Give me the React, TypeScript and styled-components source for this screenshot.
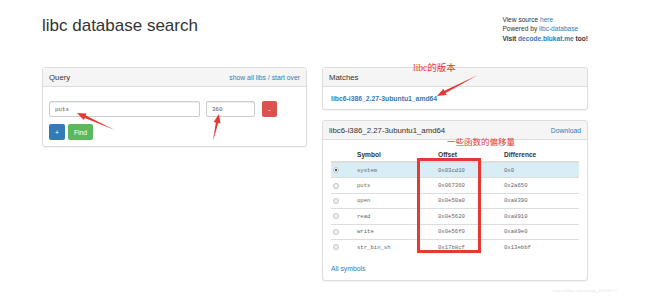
import React from 'react'
import styled, { createGlobalStyle } from 'styled-components'

const GlobalStyle = createGlobalStyle`
  html, body {
    margin: 0;
    padding: 0;
    background: #fff;
  }
  body {
    font-family: "Liberation Sans", Arial, sans-serif;
    color: #333;
  }
`

const symbols = [
  { name: 'system', offset: '0x03cd10', diff: '0x0' },
  { name: 'puts', offset: '0x067360', diff: '0x2a650' },
  { name: 'open', offset: '0x0e50a0', diff: '0xa8390' },
  { name: 'read', offset: '0x0e5620', diff: '0xa8910' },
  { name: 'write', offset: '0x0e56f0', diff: '0xa89e0' },
  { name: 'str_bin_sh', offset: '0x17b8cf', diff: '0x13ebbf' },
]

type Pt = [number, number]

// tapered red arrow, thin at the tail and a filled head at the tip
const arrowPoints = (tail: Pt, head: Pt, shaft = 2.6, headW = 7, headL = 9) => {
  const dx = head[0] - tail[0]
  const dy = head[1] - tail[1]
  const len = Math.hypot(dx, dy)
  const ux = dx / len
  const uy = dy / len
  const nx = -uy
  const ny = ux
  const bx = head[0] - ux * headL
  const by = head[1] - uy * headL
  const pts: Pt[] = [
    tail,
    [bx + nx * shaft / 2, by + ny * shaft / 2],
    [bx + nx * headW / 2, by + ny * headW / 2],
    head,
    [bx - nx * headW / 2, by - ny * headW / 2],
    [bx - nx * shaft / 2, by - ny * shaft / 2],
  ]
  return pts.map(p => p.map(v => v.toFixed(1)).join(',')).join(' ')
}

const App: React.FC = () =>
  <>
    <GlobalStyle />
    <Page>
      <Container>
        <Header>
          <Title>libc database search</Title>
          <About>
            <div>View source <a href="#">here</a></div>
            <div>Powered by <a href="#">libc-database</a></div>
            <strong>Visit <a href="#">decode.blukat.me</a> too!</strong>
          </About>
        </Header>

        <Columns>
          <Panel>
            <PanelHeading>
              <PanelTitle>Query</PanelTitle>
              <HeadLink href="#">show all libs / start over</HeadLink>
            </PanelHeading>
            <QueryBody>
              <FieldRow>
                <Field $width={151} defaultValue="puts" />
                <Field $width={49} defaultValue="360" />
                <Button $variant="danger" $width={15}>-</Button>
              </FieldRow>
              <ButtonRow>
                <Button $variant="primary" $width={16}>+</Button>
                <Button $variant="success" $width={25}>Find</Button>
              </ButtonRow>
            </QueryBody>
          </Panel>

          <Stack>
            <Panel>
              <PanelHeading>
                <PanelTitle>Matches</PanelTitle>
              </PanelHeading>
              <MatchBody>
                <MatchLink href="#">libc6-i386_2.27-3ubuntu1_amd64</MatchLink>
              </MatchBody>
            </Panel>

            <Panel>
              <PanelHeading>
                <PanelTitle>libc6-i386_2.27-3ubuntu1_amd64</PanelTitle>
                <HeadLink href="#">Download</HeadLink>
              </PanelHeading>
              <ResultBody>
                <Table>
                  <colgroup>
                    <Col $width={22} />
                    <Col $width={81} />
                    <Col $width={66} />
                    <Col />
                  </colgroup>
                  <thead>
                    <tr>
                      <Th />
                      <Th>Symbol</Th>
                      <Th>Offset</Th>
                      <Th>Difference</Th>
                    </tr>
                  </thead>
                  <tbody>
                    {symbols.map((s, i) =>
                      <Row key={s.name} $active={i === 0}>
                        <RadioCell><Radio $checked={i === 0} /></RadioCell>
                        <Td>{s.name}</Td>
                        <Td>{s.offset}</Td>
                        <Td>{s.diff}</Td>
                      </Row>
                    )}
                  </tbody>
                </Table>
                <AllLink href="#">All symbols</AllLink>
              </ResultBody>
            </Panel>
          </Stack>
        </Columns>
      </Container>

      <VersionNote>libc的版本</VersionNote>
      <OffsetNote>一些函数的偏移量</OffsetNote>
      <OffsetBox />
      <ArrowLayer width="650" height="296" viewBox="0 0 650 296">
        <polygon points={arrowPoints([115, 130], [77, 113])} />
        <polygon points={arrowPoints([213, 141], [219, 114])} />
        <polygon points={arrowPoints([478, 75], [437, 96])} />
      </ArrowLayer>
      <Watermark>https://blog.csdn.net/qq_41918771</Watermark>
    </Page>
  </>

const Page = styled.div`
  position: relative;
  width: 650px;
  height: 296px;
  overflow: hidden;
  background: #fff;
`

const Container = styled.div`
  width: 546px;
  padding-left: 42px;
`

const Header = styled.header`
  display: flex;
  justify-content: space-between;
  align-items: flex-start;
  height: 67px;
`

const Title = styled.h1`
  margin: 0;
  padding-top: 16px;
  font-size: 17px;
  line-height: 20px;
  font-weight: 400;
  color: #333;
`

const About = styled.div`
  padding-top: 15px;
  font-size: 6.6px;
  line-height: 9.4px;
  color: #333;

  a {
    color: #337ab7;
    text-decoration: none;
  }
`

const Columns = styled.div`
  display: grid;
  grid-template-columns: 265px 266px;
  column-gap: 15px;
  align-items: start;
`

const Stack = styled.div`
  display: flex;
  flex-direction: column;
  gap: 10px;
`

const Panel = styled.section`
  background: #fff;
  border: 1px solid #ddd;
  border-radius: 3px;
  box-shadow: 0 1px 1px rgba(0, 0, 0, 0.05);
`

const PanelHeading = styled.div`
  display: flex;
  justify-content: space-between;
  align-items: center;
  height: 18px;
  padding: 0 6px;
  background: #f5f5f5;
  border-bottom: 1px solid #ddd;
  border-radius: 2px 2px 0 0;
`

const PanelTitle = styled.span`
  font-size: 7.8px;
  color: #333;
`

const HeadLink = styled.a`
  font-size: 6.8px;
  color: #337ab7;
  text-decoration: none;
`

const QueryBody = styled.div`
  display: flex;
  flex-direction: column;
  gap: 7px;
  padding: 14px 6px 6px;
`

const FieldRow = styled.div`
  display: flex;
  align-items: center;
  gap: 6px;
`

const ButtonRow = styled.div`
  display: flex;
  gap: 3px;
`

const Field = styled.input<{ $width: number }>`
  box-sizing: border-box;
  width: ${({ $width }) => $width}px;
  height: 16px;
  padding: 0 5px;
  border: 1px solid #ccc;
  border-radius: 2px;
  box-shadow: inset 0 1px 1px rgba(0, 0, 0, 0.075);
  font-family: "Liberation Mono", monospace;
  font-size: 5.8px;
  color: #555;
  outline: none;
`

const buttonColors = {
  danger: '#d9534f',
  primary: '#337ab7',
  success: '#5cb85c',
}

const Button = styled.button<{ $variant: keyof typeof buttonColors; $width: number }>`
  box-sizing: border-box;
  width: ${({ $width }) => $width}px;
  height: 16px;
  padding: 0;
  border: 0;
  border-radius: 2px;
  background: ${({ $variant }) => buttonColors[$variant]};
  color: #fff;
  font-family: "Liberation Sans", Arial, sans-serif;
  font-size: 6.8px;
  margin-left: ${({ $variant }) => $variant === 'danger' ? 1 : 0}px;
`

const MatchBody = styled.div`
  display: flex;
  align-items: center;
  height: 22px;
  padding: 0 8px;
`

const MatchLink = styled.a`
  font-size: 6.8px;
  font-weight: bold;
  color: #337ab7;
  text-decoration: none;
`

const ResultBody = styled.div`
  padding: 8px 8px 6px;
`

const Table = styled.table`
  width: 100%;
  border-collapse: collapse;
  table-layout: fixed;
`

const Col = styled.col<{ $width?: number }>`
  width: ${({ $width }) => $width ? `${ $width }px` : 'auto'};
`

const Th = styled.th`
  height: 13px;
  padding: 0 4px;
  border-bottom: 2px solid #ddd;
  text-align: left;
  font-size: 6.6px;
  font-weight: bold;
  color: #333;
`

const Row = styled.tr<{ $active: boolean }>`
  background: ${({ $active }) => $active ? '#d9edf7' : 'transparent'};
`

const Td = styled.td`
  height: 14.4px;
  padding: 0 4px;
  border-top: 1px solid #ddd;
  font-family: "Liberation Mono", monospace;
  font-size: 5.6px;
  color: #666;
  white-space: nowrap;
`

const RadioCell = styled(Td)`
  padding: 0 0 0 2px;
`

const Radio = styled.span<{ $checked: boolean }>`
  display: block;
  box-sizing: border-box;
  width: 6px;
  height: 6px;
  border-radius: 50%;
  border: 1px solid #c4c4c4;
  background: ${({ $checked }) => $checked
    ? 'radial-gradient(circle, #555 0 35%, #f2f2f2 45%)'
    : '#f2f2f2'};
`

const AllLink = styled.a`
  display: block;
  margin-top: 10px;
  font-size: 6.8px;
  line-height: 10px;
  color: #337ab7;
  text-decoration: none;
`

const noteFont = `
  position: absolute;
  margin: 0;
  color: #e53935;
  font-family: "Liberation Serif", "Noto Sans CJK SC", serif;
  white-space: nowrap;
`

const VersionNote = styled.p`
  ${noteFont}
  left: 413px;
  top: 63px;
  font-size: 9.5px;
  line-height: 11px;
`

const OffsetNote = styled.p`
  ${noteFont}
  left: 447px;
  top: 137px;
  font-size: 8.5px;
  line-height: 10px;
`

const OffsetBox = styled.div`
  position: absolute;
  left: 417px;
  top: 158px;
  width: 64px;
  height: 95px;
  box-sizing: border-box;
  border: 3px solid #e53935;
`

const ArrowLayer = styled.svg`
  position: absolute;
  left: 0;
  top: 0;
  pointer-events: none;
  fill: #e53935;
`

const Watermark = styled.span`
  position: absolute;
  right: 33px;
  bottom: 3px;
  font-size: 4.2px;
  color: #e6e6e6;
  white-space: nowrap;
`

export default App
